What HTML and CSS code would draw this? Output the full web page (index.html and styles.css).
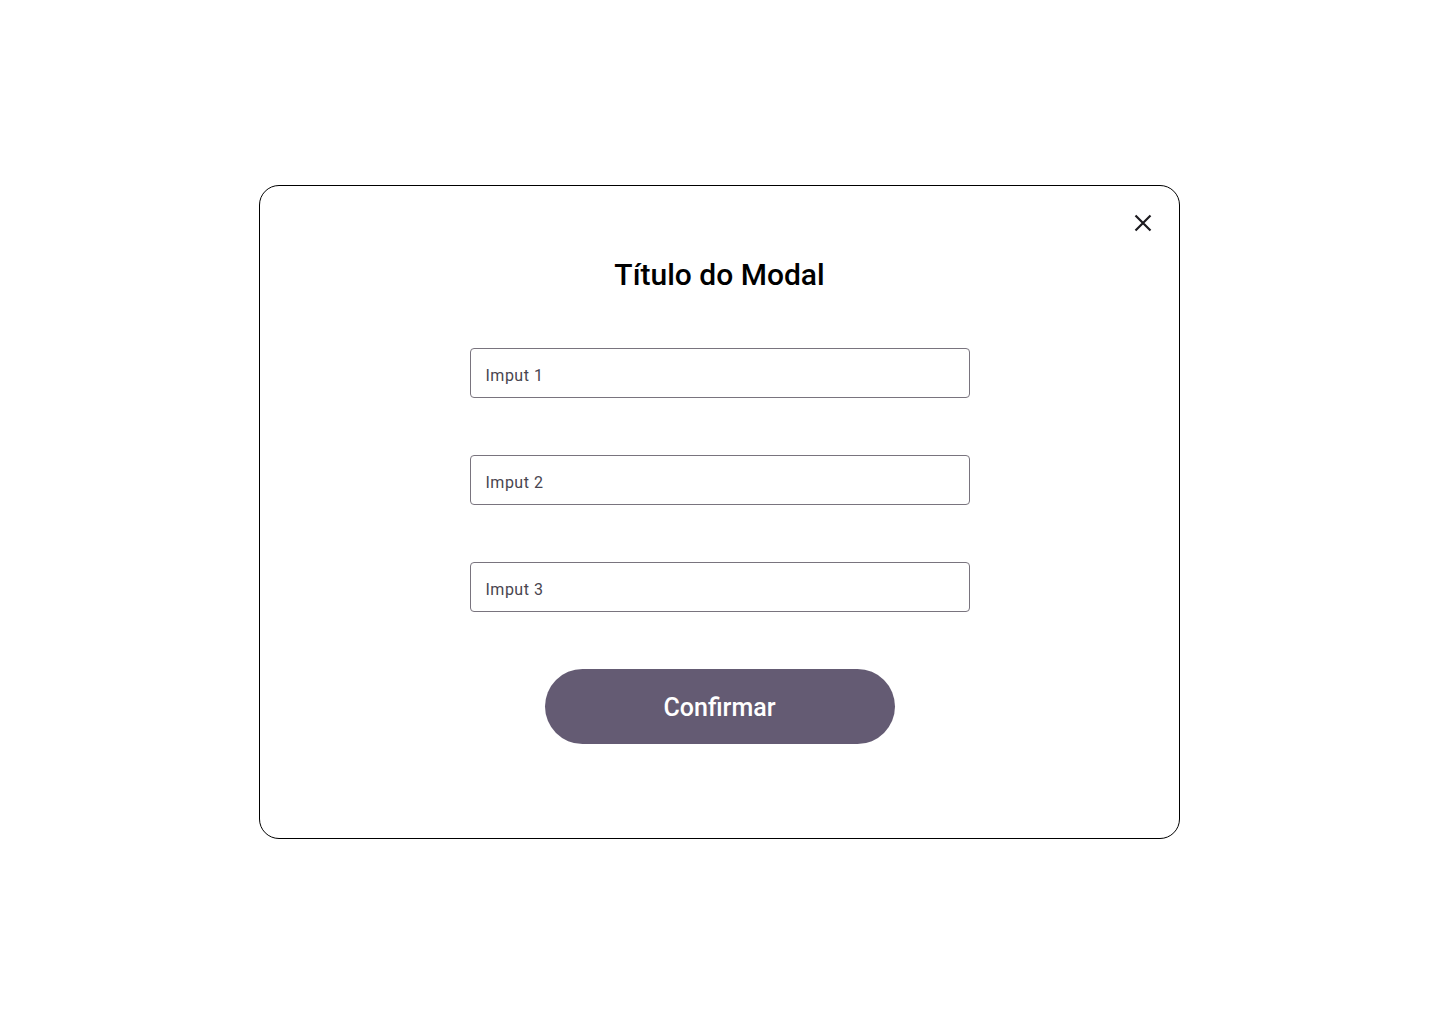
FILE: index.html
```html
<!DOCTYPE html>
<html lang="pt">
<head>
<meta charset="utf-8">
<title>Modal</title>
<link rel="stylesheet" href="styles.css">
</head>
<body>
<div class="page">
  <div class="modal">
    <button class="close" aria-label="Fechar">
      <svg width="18" height="18" viewBox="0 0 18 18"><path d="M1.5 1.5 16.5 16.5M16.5 1.5 1.5 16.5" stroke="#1d1b20" stroke-width="2.2" fill="none"/></svg>
    </button>
    <h1 class="title">Título do Modal</h1>
    <div class="fields">
      <div class="field">Imput 1</div>
      <div class="field">Imput 2</div>
      <div class="field">Imput 3</div>
    </div>
    <button class="confirm">Confirmar</button>
  </div>
</div>
</body>
</html>
```
FILE: styles.css
```css
html, body {
  margin: 0;
  padding: 0;
  background: #ffffff;
  font-family: Roboto, "Liberation Sans", sans-serif;
}
.page {
  width: 1440px;
  height: 1024px;
  display: flex;
  justify-content: flex-start;
  padding: 185px 0 0 259px;
  box-sizing: border-box;
}
.modal {
  position: relative;
  width: 921px;
  height: 654px;
  box-sizing: border-box;
  border: 1px solid #000;
  border-radius: 20px;
  display: flex;
  flex-direction: column;
  align-items: center;
  padding-top: 70px;
}
.close {
  position: absolute;
  top: 28px;
  right: 27px;
  width: 18px;
  height: 18px;
  padding: 0;
  border: 0;
  background: none;
  display: flex;
}
.title {
  margin: 0;
  font-size: 30px;
  line-height: 38px;
  font-weight: 500;
  color: #000;
}
.fields {
  margin-top: 54px;
  display: flex;
  flex-direction: column;
  gap: 57px;
}
.field {
  width: 500px;
  height: 50px;
  box-sizing: border-box;
  border: 1px solid #79747e;
  border-radius: 4px;
  padding: 5px 15px 0;
  display: flex;
  align-items: center;
  font-size: 16px;
  letter-spacing: 0.5px;
  color: #49454f;
}
.confirm {
  margin-top: 57px;
  width: 350px;
  height: 75px;
  border: 0;
  border-radius: 38px;
  background: #645b73;
  color: #fff;
  font-family: Roboto, "Liberation Sans", sans-serif;
  font-size: 25px;
  font-weight: 500;
  padding: 2px 0 0;
}
```
